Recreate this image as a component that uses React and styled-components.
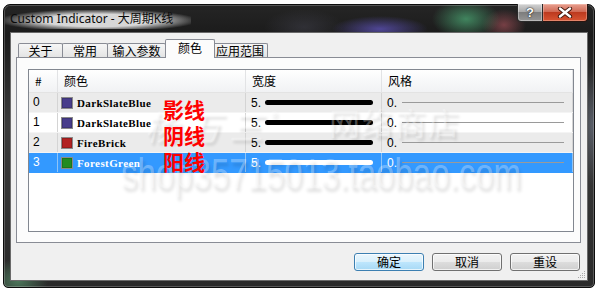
import styled, { createGlobalStyle } from "styled-components";

const GlobalStyle = createGlobalStyle`
  body {
    margin: 0;
    background: #ffffff;
    font-family: "Noto Sans CJK SC", "Noto Sans", sans-serif;
  }
`;

const cjk = `"Noto Sans CJK SC", "Noto Sans", sans-serif`;

let rows = [
  { n: 0, color: "#483d8b", name: "DarkSlateBlue" },
  { n: 1, color: "#483d8b", name: "DarkSlateBlue" },
  { n: 2, color: "#b22222", name: "FireBrick" },
  { n: 3, color: "#228b22", name: "ForestGreen", selected: true },
];

let tabs = [
  { label: "关于", w: 45 },
  { label: "常用", w: 46 },
  { label: "输入参数", w: 59 },
  { label: "颜色", w: 50, active: true },
  { label: "应用范围", w: 56 },
];

const App = () => {
  return (
    <>
      <GlobalStyle />
      <Window>
        <TitleBar>
          <Title>Custom Indicator - 大周期K线</Title>
          <Caption>
            <HelpButton>?</HelpButton>
            <CloseButton>
              <svg width="16" height="11" viewBox="0 0 16 11">
                <path d="M3 1.5 L13 9.5 M13 1.5 L3 9.5" stroke="#3a1208" strokeWidth="4.2" strokeLinecap="round" />
                <path d="M3 1.5 L13 9.5 M13 1.5 L3 9.5" stroke="#ffffff" strokeWidth="2.4" strokeLinecap="round" />
              </svg>
            </CloseButton>
          </Caption>
        </TitleBar>

        <Client>
          <TabStrip>
            {tabs.map((t) => (
              <Tab key={t.label} $w={t.w} $active={t.active}>
                {t.label}
              </Tab>
            ))}
          </TabStrip>

          <Panel>
            <ListView>
              <Header>
                <HeadCell>#</HeadCell>
                <HeadCell>颜色</HeadCell>
                <HeadCell>宽度</HeadCell>
                <HeadCell>风格</HeadCell>
              </Header>
              {rows.map((r) => (
                <Row key={r.n} $odd={r.n % 2 === 1} $selected={r.selected}>
                  <NumCell>{r.n}</NumCell>
                  <ColorCell>
                    <Swatch $color={r.color} />
                    <ColorName>{r.name}</ColorName>
                  </ColorCell>
                  <LineCell>
                    <Value>5.</Value>
                    <ThickLine $selected={r.selected} />
                  </LineCell>
                  <LineCell $last>
                    <Value>0.</Value>
                    <ThinLine />
                  </LineCell>
                </Row>
              ))}

              <Watermark>
                <Brand>杨万三<sup>®</sup></Brand>
                <Shop>网络商店</Shop>
                <Url>shop35715013.taobao.com</Url>
              </Watermark>

              <Notes>
                <span>影线</span>
                <span>阴线</span>
                <span>阳线</span>
              </Notes>
            </ListView>
          </Panel>

          <ButtonRow>
            <Button $default>确定</Button>
            <Button>取消</Button>
            <Button>重设</Button>
          </ButtonRow>

          <Grip>
            <svg width="9" height="9" viewBox="0 0 9 9">
              <g fill="#a8a8a8">
                <rect x="7" y="1" width="1" height="1" />
                <rect x="5" y="3" width="1" height="1" />
                <rect x="7" y="3" width="1" height="1" />
                <rect x="3" y="5" width="1" height="1" />
                <rect x="5" y="5" width="1" height="1" />
                <rect x="7" y="5" width="1" height="1" />
                <rect x="1" y="7" width="1" height="1" />
                <rect x="3" y="7" width="1" height="1" />
                <rect x="5" y="7" width="1" height="1" />
                <rect x="7" y="7" width="1" height="1" />
              </g>
            </svg>
          </Grip>
        </Client>
      </Window>
    </>
  );
};

export default App;

let Window = styled.div`
  box-sizing: border-box;
  width: 592px;
  height: 284px;
  margin: 4px 0 0 3px;
  padding: 0 6px 6px 6px;
  display: flex;
  flex-direction: column;
  border: 1px solid #0c0c0c;
  border-radius: 7px 7px 5px 5px;
  box-shadow: inset 0 0 0 1px rgba(255, 255, 255, 0.22);
  background:
    radial-gradient(ellipse 48px 13px at 376px 24px, rgba(96, 84, 190, 0.75), transparent),
    radial-gradient(ellipse 34px 20px at 462px 14px, rgba(70, 150, 105, 0.85), transparent),
    radial-gradient(ellipse 22px 16px at 500px 20px, rgba(190, 90, 100, 0.55), transparent),
    radial-gradient(ellipse 40px 18px at 300px 22px, rgba(60, 60, 70, 0.6), transparent),
    radial-gradient(ellipse 30px 22px at 14px 276px, rgba(90, 150, 110, 0.7), transparent),
    radial-gradient(ellipse 10px 60px at 588px 120px, rgba(120, 130, 150, 0.5), transparent),
    linear-gradient(#252525, #1b1b1b 30px, #3a3a3a 120px, #2a2a2a);
`;

let TitleBar = styled.div`
  height: 27px;
  display: flex;
  justify-content: space-between;
  align-items: flex-start;
`;

let Title = styled.div`
  margin: 5px 0 0 -5px;
  padding: 1px 18px 3px 5px;
  font-family: "Noto Sans", ${cjk};
  font-size: 12px;
  line-height: 15px;
  color: #0a0a0a;
  background: radial-gradient(ellipse 54% 60% at 50% 55%, rgba(225, 225, 225, 0.95) 55%, rgba(200, 200, 200, 0) 100%);
`;

let Caption = styled.div`
  display: flex;
  margin-top: -1px;
`;

let HelpButton = styled.div`
  box-sizing: border-box;
  width: 26px;
  height: 18px;
  border: 1px solid #2a2a2a;
  border-top: none;
  border-radius: 0 0 0 4px;
  background: linear-gradient(#d3d3d3, #a9a9a9 45%, #7d7d7d 50%, #969696);
  box-shadow: inset 0 0 0 1px rgba(255, 255, 255, 0.35);
  color: #ffffff;
  font-family: "Liberation Sans", sans-serif;
  font-weight: bold;
  font-size: 13px;
  line-height: 17px;
  text-align: center;
  text-shadow: 0 0 2px #222, 0 0 1px #000;
`;

let CloseButton = styled.div`
  box-sizing: border-box;
  width: 45px;
  height: 18px;
  border: 1px solid #2a1510;
  border-top: none;
  border-left: none;
  border-radius: 0 0 4px 0;
  background: linear-gradient(#e8a090, #d06a55 45%, #bd3a1f 50%, #d85533);
  box-shadow: inset 0 0 0 1px rgba(255, 220, 210, 0.35);
  display: flex;
  align-items: center;
  justify-content: center;
`;

let Client = styled.div`
  position: relative;
  box-sizing: border-box;
  flex: 1;
  padding: 4px 6px 0 5px;
  background: #f0f0f0;
  border: 1px solid #6a6a6a;
  display: flex;
  flex-direction: column;
`;

let TabStrip = styled.div`
  display: flex;
  align-items: flex-end;
  height: 20px;
  padding-left: 2px;
  position: relative;
  z-index: 1;
`;

let Tab = styled.div`
  box-sizing: border-box;
  width: ${(p) => p.$w}px;
  height: ${(p) => (p.$active ? 19 : 14)}px;
  margin: ${(p) => (p.$active ? "0 -2px -1px -2px" : "0")};
  border: 1px solid #898c95;
  border-bottom: none;
  border-radius: 2px 2px 0 0;
  background: ${(p) => (p.$active ? "#fcfcfc" : "linear-gradient(#f6f6f6, #e4e4e4)")};
  font-family: ${cjk};
  font-size: 12px;
  line-height: ${(p) => (p.$active ? "14px" : "13px")};
  padding-top: ${(p) => (p.$active ? 1 : 0)}px;
  text-align: center;
  color: #000;
  position: relative;
  z-index: ${(p) => (p.$active ? 2 : 1)};
  & + & {
    margin-left: ${(p) => (p.$active ? -2 : -1)}px;
  }
`;

let Panel = styled.div`
  box-sizing: border-box;
  height: 186px;
  padding: 11px 6px 10px 11px;
  border: 1px solid #898c95;
  background: #fcfcfc;
  display: flex;
`;

let ListView = styled.div`
  position: relative;
  flex: 1;
  overflow: hidden;
  border: 1px solid #828790;
  background: #ffffff;
`;

const columns = "29px 188px 136px 1fr";

let Header = styled.div`
  display: grid;
  grid-template-columns: ${columns};
  height: 22px;
  border-bottom: 1px solid #e3e3e3;
  background: linear-gradient(#ffffff, #f7f8f9 50%, #f1f2f4);
`;

let HeadCell = styled.div`
  padding-left: 6px;
  border-right: 1px solid #e2e3e5;
  font-family: ${cjk};
  font-size: 12px;
  line-height: 22px;
  color: #000;
`;

let Row = styled.div`
  display: grid;
  grid-template-columns: ${columns};
  height: 19px;
  background: ${(p) => (p.$selected ? "#3399ff" : p.$odd ? "#ffffff" : "#ebebeb")};
  color: ${(p) => (p.$selected ? "#ffffff" : "#000000")};
  border-bottom: 1px solid ${(p) => (p.$selected ? "#3399ff" : "#f4f4f4")};
  & > div {
    border-right: 1px solid ${(p) => (p.$selected ? "#8fc4f7" : "#d4d4d4")};
  }
`;

let NumCell = styled.div`
  padding-left: 4px;
  font-family: "Liberation Sans", sans-serif;
  font-size: 12px;
  line-height: 19px;
`;

let ColorCell = styled.div`
  display: flex;
  align-items: center;
  gap: 4px;
  padding-left: 3px;
`;

let Swatch = styled.span`
  box-sizing: border-box;
  width: 12px;
  height: 12px;
  background: ${(p) => p.$color};
  border: 1px solid #8a8a8a;
  box-shadow: inset 0 0 0 1px rgba(0, 0, 0, 0.15);
`;

let ColorName = styled.span`
  font-family: "Liberation Serif", serif;
  font-weight: bold;
  font-size: 11px;
  letter-spacing: 0.4px;
`;

let LineCell = styled.div`
  display: flex;
  align-items: center;
  gap: 5px;
  padding-left: 5px;
  padding-right: ${(p) => (p.$last ? 8 : 0)}px;
`;

let Value = styled.span`
  width: 9px;
  font-family: "Liberation Sans", sans-serif;
  font-size: 12px;
`;

let ThickLine = styled.span`
  width: 108px;
  height: 5px;
  border-radius: 3px;
  background: ${(p) => (p.$selected ? "#ffffff" : "#000000")};
`;

let ThinLine = styled.span`
  flex: 1;
  height: 1px;
  margin-left: 1px;
  background: #9a9a9a;
`;

let Watermark = styled.div`
  position: absolute;
  inset: 0;
  pointer-events: none;
  color: rgba(255, 255, 255, 0.3);
  text-shadow: 2px 3px 3px rgba(0, 0, 0, 0.12);
  font-family: ${cjk};
`;

let Brand = styled.span`
  position: absolute;
  left: 116px;
  top: 26px;
  font-size: 34px;
  font-style: italic;
  letter-spacing: 8px;
  line-height: 40px;
  sup {
    font-size: 14px;
    font-style: normal;
    vertical-align: 18px;
  }
`;

let Shop = styled.span`
  position: absolute;
  left: 300px;
  top: 34px;
  font-size: 31px;
  line-height: 36px;
  letter-spacing: 2px;
`;

let Url = styled.span`
  position: absolute;
  left: 92px;
  top: 80px;
  font-family: "Liberation Sans", sans-serif;
  font-size: 33px;
  line-height: 36px;
  transform: scaleY(1.3);
  transform-origin: left top;
`;

let Notes = styled.div`
  position: absolute;
  left: 134px;
  top: 26px;
  display: flex;
  flex-direction: column;
  color: #ff0000;
  font-family: ${cjk};
  font-weight: bold;
  font-size: 21px;
  line-height: 26px;
`;

let ButtonRow = styled.div`
  display: flex;
  justify-content: flex-end;
  gap: 8px;
  margin: 10px 1px 0 0;
`;

let Button = styled.div`
  box-sizing: border-box;
  width: 70px;
  height: 18px;
  border: 1px solid ${(p) => (p.$default ? "#3c7fb1" : "#707070")};
  border-radius: 3px;
  background: ${(p) =>
    p.$default
      ? "linear-gradient(#eaf6fd, #d9f0fc 50%, #bee6fd 50%, #a7d9f5)"
      : "linear-gradient(#f2f2f2, #ebebeb 50%, #dddddd 50%, #cfcfcf)"};
  box-shadow: inset 0 0 0 1px rgba(255, 255, 255, 0.7);
  font-family: ${cjk};
  font-size: 12px;
  line-height: 16px;
  text-align: center;
  color: #000;
`;

let Grip = styled.div`
  position: absolute;
  right: 1px;
  bottom: 1px;
  line-height: 0;
`;
